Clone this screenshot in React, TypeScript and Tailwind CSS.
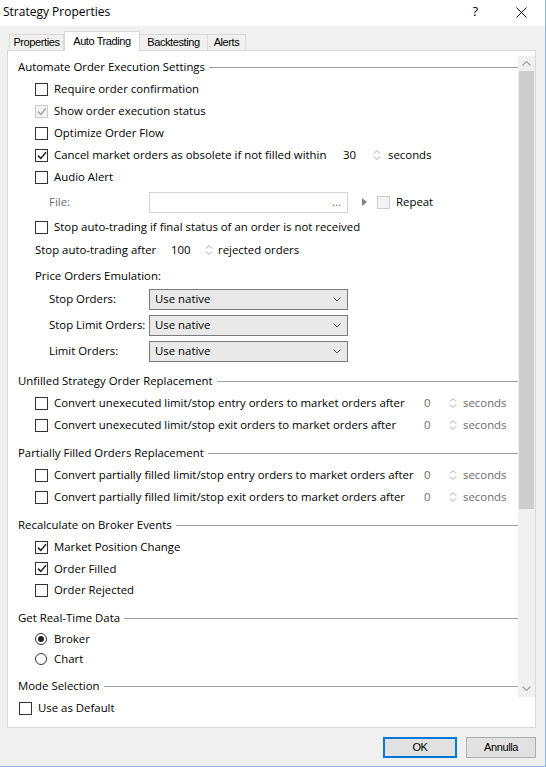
import React from "react";

const ui = "[font-family:'Open_Sans','Noto_Sans',sans-serif] text-[11.4px]";
const narrow = "[font-family:'Liberation_Sans',Arial,sans-serif] text-[11px] tracking-[-0.4px]";

function Box({ checked = false, disabled = false }: { checked?: boolean; disabled?: boolean }) {
  return (
    <span
      className={`w-[13px] h-[13px] shrink-0 border flex items-center justify-center ${
        disabled ? "border-[#cccccc] bg-[#f3f3f3]" : "border-[#333333] bg-white"
      }`}
    >
      {checked && (
        <svg width="10" height="9" viewBox="0 0 10 9">
          <path d="M1 4.6 L3.8 7.4 L9 1.2" fill="none" stroke={disabled ? "#a8a8a8" : "#222222"} strokeWidth="1.6" />
        </svg>
      )}
    </span>
  );
}

function Spin() {
  return (
    <svg width="8" height="14" viewBox="0 0 8 14" className="shrink-0">
      <path d="M1 5.5 L4 2.5 L7 5.5 M1 8.5 L4 11.5 L7 8.5" fill="none" stroke="#ababab" strokeWidth="1" />
    </svg>
  );
}

function Group({ title, top = false }: { title: string; top?: boolean }) {
  return (
    <div className={`h-[22px] flex items-center pl-[10px] ${top ? "" : "mt-[6px]"}`}>
      <span>{title}</span>
      <div className="flex-1 h-px bg-[#a0a0a0] ml-[4px]" />
    </div>
  );
}

function CheckRow({ label, checked = false, disabled = false, h = "h-[22px]" }: { label: string; checked?: boolean; disabled?: boolean; h?: string }) {
  return (
    <div className={`${h} flex items-center pl-[27px] gap-[6px]`}>
      <Box checked={checked} disabled={disabled} />
      <span>{label}</span>
    </div>
  );
}

function ConvertRow({ label }: { label: string }) {
  return (
    <div className="h-[22px] flex items-center pl-[27px]">
      <Box />
      <span className="w-[376px] pl-[6px] whitespace-nowrap">{label}</span>
      <span className="w-[25px] text-[#6d6d6d]">0</span>
      <Spin />
      <span className="pl-[6px] text-[#6d6d6d]">seconds</span>
    </div>
  );
}

function SelectRow({ label }: { label: string }) {
  return (
    <div className="h-[26px] flex items-center pl-[41px]">
      <span className="w-[100px]">{label}</span>
      <div className="w-[199px] h-[21px] border border-[#7a7a7a] bg-[#e9e9e9] flex items-center pl-[5px] pr-[6px]">
        <span className="flex-1">Use native</span>
        <svg width="8" height="5" viewBox="0 0 8 5">
          <path d="M0.5 0.5 L4 4 L7.5 0.5" fill="none" stroke="#555555" strokeWidth="1" />
        </svg>
      </div>
    </div>
  );
}

function Radio({ label, on = false }: { label: string; on?: boolean }) {
  return (
    <div className="h-[20px] flex items-center pl-[27px] gap-[7px]">
      <span className="w-[12px] h-[12px] rounded-full border border-[#333333] bg-white flex items-center justify-center">
        {on && <span className="w-[6px] h-[6px] rounded-full bg-[#222222]" />}
      </span>
      <span>{label}</span>
    </div>
  );
}

export default function App() {
  return (
    <div className={`w-[546px] h-[767px] bg-[#f0f0f0] border-r border-b border-[#8fb7e2] flex flex-col text-black ${ui}`}>
      <div className="h-[26px] bg-white flex items-center pl-[3px] pr-[18px] pb-[2px]">
        <span className="flex-1 text-[12px]">Strategy Properties</span>
        <span className="text-[13px] mr-[38px]">?</span>
        <svg width="11" height="11" viewBox="0 0 11 11">
          <path d="M0.5 0.5 L10.5 10.5 M10.5 0.5 L0.5 10.5" stroke="#111111" strokeWidth="1" />
        </svg>
      </div>

      <div className={`mt-[5px] h-[19px] flex items-end pl-[9px] ${narrow}`}>
        <div className="h-[16px] w-[55px] border border-b-0 border-[#d9d9d9] flex items-center justify-center">Properties</div>
        <div className="h-[20px] w-[76px] -mb-px relative z-10 bg-white border border-b-0 border-[#d9d9d9] flex items-center justify-center pb-[1px]">
          Auto Trading
        </div>
        <div className="h-[16px] w-[68px] border border-b-0 border-l-0 border-[#d9d9d9] flex items-center justify-center">Backtesting</div>
        <div className="h-[16px] w-[38px] border border-b-0 border-l-0 border-[#d9d9d9] flex items-center justify-center">Alerts</div>
      </div>

      <div className="ml-[7px] w-[529px] h-[678px] border border-[#d9d9d9] bg-white flex flex-col pt-[5px]">
        <div className="h-[641px] flex">
          <div className="flex-1 overflow-hidden flex flex-col">
            <Group title="Automate Order Execution Settings" top />
            <CheckRow label="Require order confirmation" />
            <CheckRow label="Show order execution status" checked disabled />
            <CheckRow label="Optimize Order Flow" />
            <div className="h-[22px] flex items-center pl-[27px]">
              <Box checked />
              <span className="w-[295px] pl-[6px] whitespace-nowrap">Cancel market orders as obsolete if not filled within</span>
              <span className="w-[30px]">30</span>
              <Spin />
              <span className="pl-[7px]">seconds</span>
            </div>
            <CheckRow label="Audio Alert" />
            <div className="h-[28px] flex items-center pl-[41px]">
              <span className="w-[100px] text-[#6d6d6d]">File:</span>
              <div className="w-[199px] h-[21px] border border-[#d4d4d4] bg-white flex items-center justify-end pr-[6px] text-[#6d6d6d]">
                ...
              </div>
              <svg width="5" height="8" viewBox="0 0 5 8" className="ml-[14px]">
                <path d="M0 0 L5 4 L0 8 Z" fill="#838383" />
              </svg>
              <span className="ml-[10px]">
                <Box disabled />
              </span>
              <span className="pl-[6px]">Repeat</span>
            </div>
            <CheckRow label="Stop auto-trading if final status of an order is not received" />
            <div className="h-[24px] flex items-center pl-[27px]">
              <span className="w-[136px]">Stop auto-trading after</span>
              <span className="w-[34px]">100</span>
              <Spin />
              <span className="pl-[5px]">rejected orders</span>
            </div>
            <div className="h-[24px] flex items-center pl-[27px] pt-[4px]">Price Orders Emulation:</div>
            <SelectRow label="Stop Orders:" />
            <SelectRow label="Stop Limit Orders:" />
            <SelectRow label="Limit Orders:" />

            <Group title="Unfilled Strategy Order Replacement" />
            <ConvertRow label="Convert unexecuted limit/stop entry orders to market orders after" />
            <ConvertRow label="Convert unexecuted limit/stop exit orders to market orders after" />

            <Group title="Partially Filled Orders Replacement" />
            <ConvertRow label="Convert partially filled limit/stop entry orders to market orders after" />
            <ConvertRow label="Convert partially filled limit/stop exit orders to market orders after" />

            <Group title="Recalculate on Broker Events" />
            <CheckRow label="Market Position Change" checked />
            <CheckRow label="Order Filled" checked h="h-[21px]" />
            <CheckRow label="Order Rejected" />

            <Group title="Get Real-Time Data" />
            <Radio label="Broker" on />
            <Radio label="Chart" />

            <Group title="Mode Selection" />
          </div>

          <div className="w-[17px] bg-[#f0f0f0] flex flex-col">
            <div className="h-[15px] flex items-center justify-center">
              <svg width="9" height="5" viewBox="0 0 9 5">
                <path d="M0.5 4.5 L4.5 0.5 L8.5 4.5" fill="none" stroke="#a3a3a3" strokeWidth="1.2" />
              </svg>
            </div>
            <div className="h-[438px] mx-px bg-[#cdcdcd]" />
            <div className="flex-1" />
            <div className="h-[17px] flex items-center justify-center">
              <svg width="9" height="5" viewBox="0 0 9 5">
                <path d="M0.5 0.5 L4.5 4.5 L8.5 0.5" fill="none" stroke="#a3a3a3" strokeWidth="1.2" />
              </svg>
            </div>
          </div>
        </div>
        <div className="h-[22px] flex items-center pl-[11px] gap-[6px]">
          <Box />
          <span>Use as Default</span>
        </div>
      </div>

      <div className={`mt-[9px] flex justify-end pr-[9px] gap-[9px] ${narrow}`}>
        <button className="w-[74px] h-[21px] border-2 border-[#0078d7] bg-[#e1e1e1] flex items-center justify-center">OK</button>
        <button className="w-[70px] h-[21px] border border-[#adadad] bg-[#e1e1e1] flex items-center justify-center">Annulla</button>
      </div>
    </div>
  );
}
